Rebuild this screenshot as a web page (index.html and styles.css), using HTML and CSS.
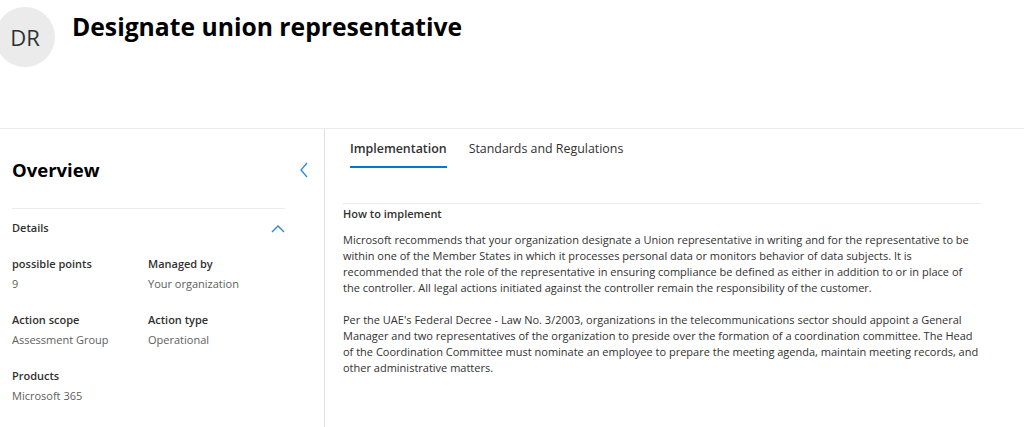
FILE: index.html
```html
<!DOCTYPE html>
<html lang="en">
<head>
    <meta charset="UTF-8">
    <meta name="viewport" content="width=device-width, initial-scale=1.0">
    <title>Designate union representative</title>
    <link rel="stylesheet" href="styles.css">
</head>
<body>

    <!-- page header -->
    <div class="page-header">
        <div class="avatar">DR</div>
        <h1 class="page-title">Designate union representative</h1>
    </div>

    <div class="page-body">
        <!-- overview panel -->
        <div class="overview">
            <div class="overview-head">
                <h2>Overview</h2>
                <svg class="chevron-left" width="10" height="16" viewBox="0 0 10 16">
                    <path d="M8 1 L2 8 L8 15" fill="none" stroke="#2b88d8" stroke-width="1.3"/>
                </svg>
            </div>
            <div class="details">
                <div class="details-head">
                    <span>Details</span>
                    <svg width="14" height="9" viewBox="0 0 14 9">
                        <path d="M1 8 L7 2 L13 8" fill="none" stroke="#2b88d8" stroke-width="1.4"/>
                    </svg>
                </div>
                <div class="details-grid">
                    <div class="field">
                        <div class="field-label">possible points</div>
                        <div class="field-value">9</div>
                    </div>
                    <div class="field">
                        <div class="field-label">Managed by</div>
                        <div class="field-value">Your organization</div>
                    </div>
                    <div class="field">
                        <div class="field-label">Action scope</div>
                        <div class="field-value">Assessment Group</div>
                    </div>
                    <div class="field">
                        <div class="field-label">Action type</div>
                        <div class="field-value">Operational</div>
                    </div>
                    <div class="field">
                        <div class="field-label">Products</div>
                        <div class="field-value">Microsoft 365</div>
                    </div>
                </div>
            </div>
        </div>

        <!-- tabs and content -->
        <div class="content">
            <div class="tabs">
                <div class="tab active">Implementation</div>
                <div class="tab">Standards and Regulations</div>
            </div>
            <div class="section">
                <h3>How to implement</h3>
                <p>Microsoft recommends that your organization designate a Union representative in writing and for the representative to be within one of the Member States in which it processes personal data or monitors behavior of data subjects. It is recommended that the role of the representative in ensuring compliance be defined as either in addition to or in place of the controller. All legal actions initiated against the controller remain the responsibility of the customer.</p>
                <p>Per the UAE's Federal Decree - Law No. 3/2003, organizations in the telecommunications sector should appoint a General Manager and two representatives of the organization to preside over the formation of a coordination committee. The Head of the Coordination Committee must nominate an employee to prepare the meeting agenda, maintain meeting records, and other administrative matters.</p>
            </div>
        </div>
    </div>

</body>
</html>
```

FILE: styles.css
```css
body {
    margin: 0;
    font-family: "Open Sans", "Noto Sans", sans-serif;
    color: #323130;
    background-color: white;
    height: 427px;
    display: flex;
    flex-direction: column;
    overflow: hidden;
}

/* 头部 */
.page-header {
    display: flex;
    align-items: flex-start;
    height: 128px;
    flex-shrink: 0;
    border-bottom: 1px solid #edebe9;
}
.avatar {
    width: 60px;
    height: 60px;
    margin-left: -5px;
    margin-top: 7px;
    border-radius: 50%;
    background-color: #ebebeb;
    display: flex;
    justify-content: center;
    align-items: center;
    font-size: 22px;
    color: #323130;
}
.page-title {
    margin: 10px 0 0 17px;
    font-size: 24.7px;
    line-height: 34px;
    font-weight: 700;
    color: #000;
}

.page-body {
    display: flex;
    flex-grow: 1;
}

/* 左侧概览 */
.overview {
    width: 312px;
    padding-left: 12px;
    border-right: 1px solid #e1dfdd;
}
.overview-head {
    display: flex;
    justify-content: space-between;
    align-items: center;
    width: 297px;
    margin-top: 27px;
    margin-bottom: 24px;
}
.overview-head h2 {
    margin: 0;
    font-size: 18.5px;
    line-height: 28px;
    font-weight: 700;
    color: #000;
}
.details {
    width: 273px;
    border-top: 1px solid #edebe9;
}
.details-head {
    display: flex;
    justify-content: space-between;
    align-items: center;
    padding-top: 9px;
    font-size: 11px;
    line-height: 20px;
    font-weight: 600;
}
.details-grid {
    display: grid;
    grid-template-columns: 136px 1fr;
    row-gap: 16px;
    margin-top: 16px;
}
.field {
    font-size: 11px;
    line-height: 20px;
}
.field-label {
    font-weight: 600;
}
.field-value {
    color: #605e5c;
}

/* 右侧内容 */
.content {
    padding-left: 18px;
    width: 638px;
}
.tabs {
    display: flex;
    gap: 22px;
    margin: 10px 0 0 7px;
}
.tab {
    font-size: 12.4px;
    line-height: 20px;
    padding-bottom: 7px;
    color: #323130;
}
.tab.active {
    font-weight: 600;
    border-bottom: 2px solid #0078d4;
}
.section {
    margin-top: 35px;
    border-top: 1px solid #edebe9;
    padding-top: 2px;
}
.section h3 {
    margin: 0;
    font-size: 11px;
    line-height: 16px;
    font-weight: 600;
}
.section p {
    margin: 10px 0 16px 0;
    font-size: 11px;
    line-height: 16px;
}
.section p + p {
    margin-top: 0;
}
```
